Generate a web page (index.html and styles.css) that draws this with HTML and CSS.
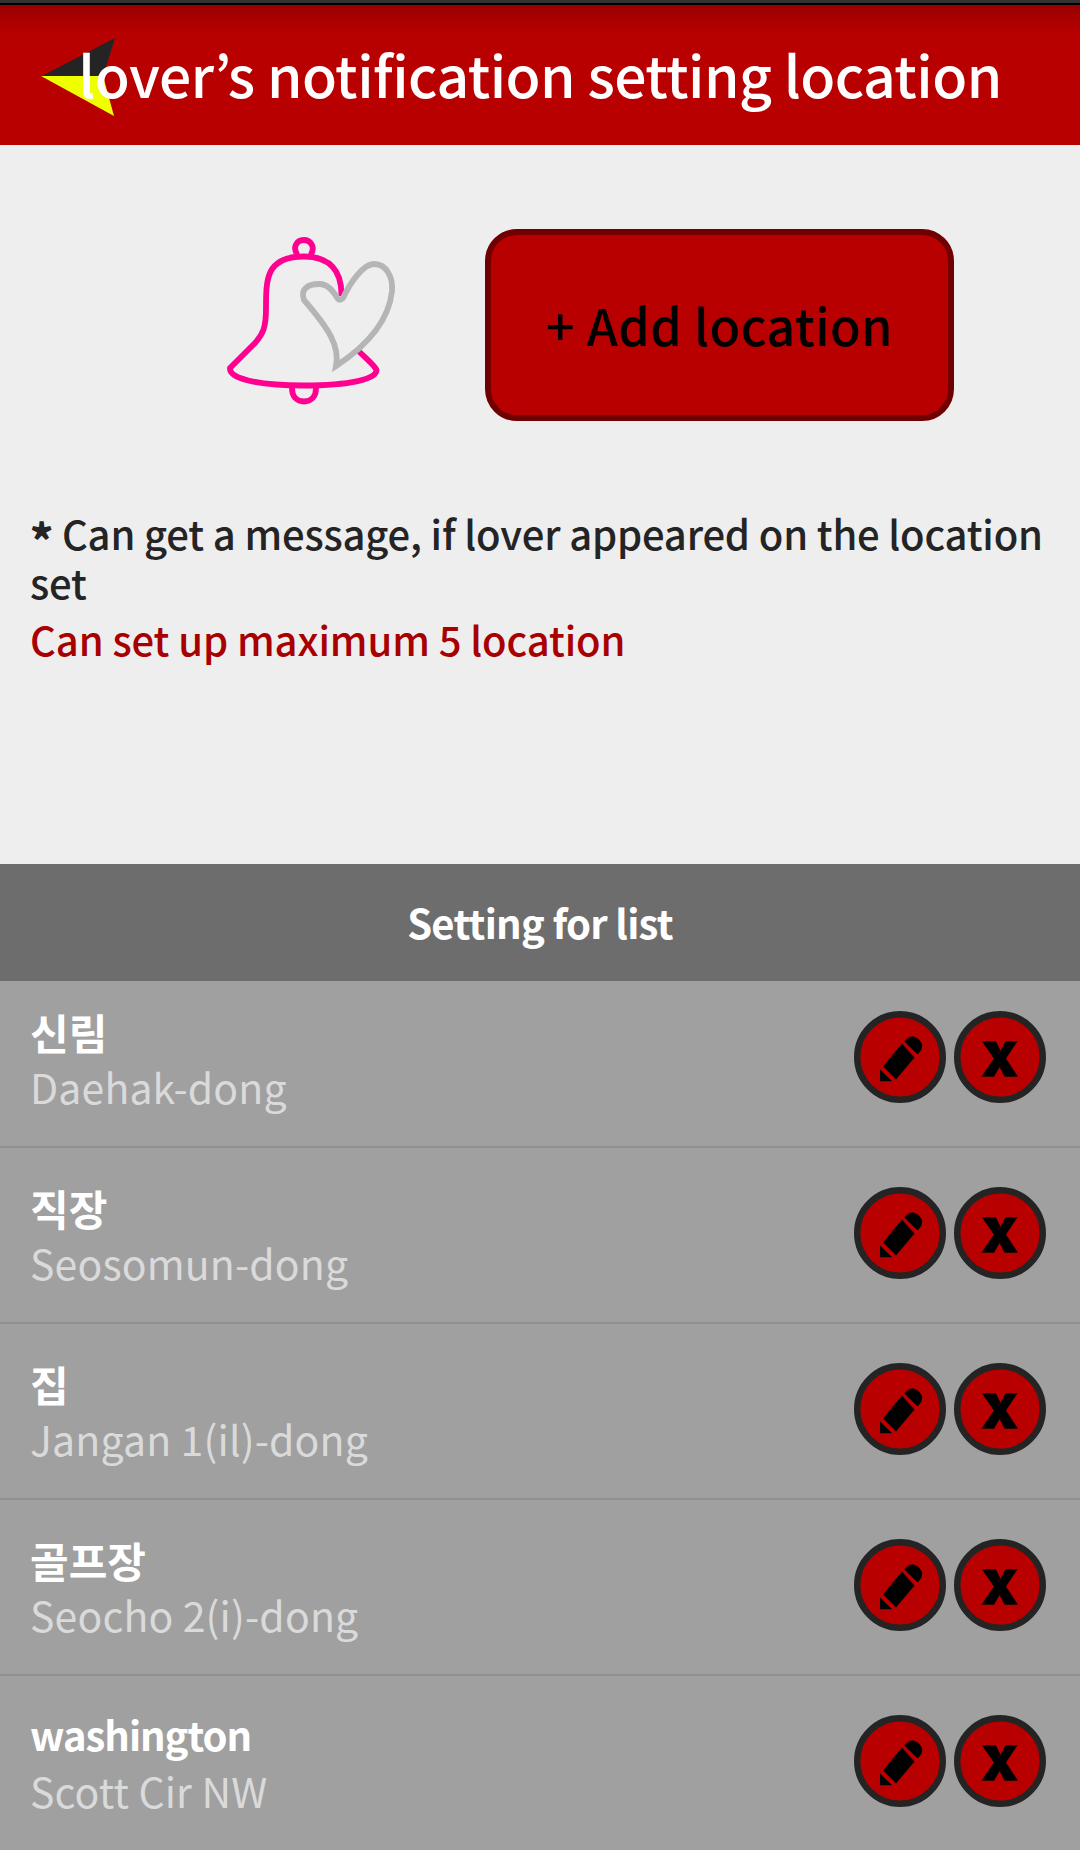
FILE: index.html
```html
<!DOCTYPE html>
<html lang="en">
<head>
<meta charset="utf-8">
<title>Notification locations</title>
<link rel="stylesheet" href="styles.css">
</head>
<body>
<svg class="sprite" aria-hidden="true">
  <symbol id="edit" viewBox="0 0 92 92">
    <circle cx="46" cy="46" r="42.8" fill="#b80000" stroke="#242424" stroke-width="6.4"/>
    <path d="M48 32.500 60.500 46.500 42 68.500 29 55.500Z M50.500 30.500Q58 21.500 65.500 29Q72 36 63.500 43.500Z M26 58.500 38 70.300H26Z"/>
  </symbol>
  <symbol id="remove" viewBox="0 0 92 92">
    <circle cx="46" cy="46" r="42.8" fill="#b80000" stroke="#242424" stroke-width="6.4"/>
    <path d="M28 30.300H42L46.500 40 51.500 30.300H63.500L52 47.500 64 65.800H50.500L45.700 56 40 65.800H27.500L39.800 47.500Z"/>
  </symbol>
</svg>
<div class="status"></div>
<header class="bar">
  <svg class="back" viewBox="0 0 76 80"><path d="M0 38.500 74 0 62 38.500Z" fill="#242424"/><path d="M0 38H62L73 78Z" fill="#f0ff00"/></svg>
  <h1 class="title">lover’s notification setting location</h1>
</header>
<main>
  <section class="intro">
    <div class="hero">
      <svg class="bell" viewBox="0 0 220 220" fill="none" stroke-width="5.8">
        <g stroke="#ff0090">
          <path d="M97.500 45C92 37 97 30 103.700 30S116 37 110.500 45"/>
          <path d="M141.500 86C142 60 129 46.500 104 46.500C66 46.500 66 69 66 98C66 118 63 124 55 133L30 158C29 168 55 175.500 104 175.500C150 175.500 177 169 176.500 160C175 156 170 152 158.500 141"/>
          <path d="M92 178C92 187 97 191.500 104 191.500S116 187 116 178"/>
        </g>
        <path stroke="#b5b5b5" d="M136 156C140 136 129 119 104 90C100 79 108 74 119 74C128 74 133 81 138 89Q140 91 143 88C150 73 163 54 174 54C187 54 193 68 192 81C189 110 168 135 136 156Z"/>
      </svg>
      <button class="add">+ Add location</button>
    </div>
    <p class="note"><span class="mark">*</span> Can get a message, if lover appeared on the location set</p>
    <p class="limit">Can set up maximum 5 location</p>
  </section>
  <h2 class="list-title">Setting for list</h2>
  <ul class="list">
    <li class="row">
      <div class="text"><p class="name">신림</p><p class="place">Daehak-dong</p></div>
      <svg class="action"><use href="#edit"/></svg><svg class="action"><use href="#remove"/></svg>
    </li>
    <li class="row">
      <div class="text"><p class="name">직장</p><p class="place">Seosomun-dong</p></div>
      <svg class="action"><use href="#edit"/></svg><svg class="action"><use href="#remove"/></svg>
    </li>
    <li class="row">
      <div class="text"><p class="name">집</p><p class="place">Jangan 1(il)-dong</p></div>
      <svg class="action"><use href="#edit"/></svg><svg class="action"><use href="#remove"/></svg>
    </li>
    <li class="row">
      <div class="text"><p class="name">골프장</p><p class="place">Seocho 2(i)-dong</p></div>
      <svg class="action"><use href="#edit"/></svg><svg class="action"><use href="#remove"/></svg>
    </li>
    <li class="row">
      <div class="text"><p class="name latin">washington</p><p class="place">Scott Cir NW</p></div>
      <svg class="action"><use href="#edit"/></svg><svg class="action"><use href="#remove"/></svg>
    </li>
  </ul>
</main>
</body>
</html>
```
FILE: styles.css
```css
* { box-sizing: border-box; margin: 0; padding: 0; }
body {
  height: 1850px;
  overflow: hidden;
  background: #eee;
  font-family: "Noto Sans CJK KR", sans-serif;
}
.sprite { display: none; }
.status { height: 5px; background: #333; border-bottom: 2px solid #000; }
.bar {
  position: relative;
  height: 140px;
  background: linear-gradient(#980000, #a50000 10px, #b80000 30px);
}
.back { position: absolute; left: 41px; top: 33px; width: 76px; height: 80px; }
.title {
  position: relative;
  color: #fff;
  font-size: 57px;
  font-weight: 500;
  line-height: 136px;
  letter-spacing: -0.54px;
  text-align: center;
  white-space: nowrap;
}
.intro { height: 719px; padding: 65px 30px 0; }
.hero { display: flex; gap: 65px; height: 299px; padding-left: 170px; }
.bell { width: 220px; height: 220px; }
.add {
  width: 469px;
  height: 192px;
  margin-top: 19px;
  padding-bottom: 2px;
  background: #b80000;
  border: 6px solid #700000;
  border-radius: 32px;
  color: #000;
  font: 500 50px/1 "Noto Sans CJK KR", sans-serif;
  letter-spacing: 0.5px;
}
.note { color: #242424; font-size: 40px; font-weight: 500; line-height: 49px; letter-spacing: -0.18px; margin-right: -20px; }
.mark { font-size: 44px; font-weight: 900; line-height: 0; vertical-align: -7px; }
.limit { margin-top: 8px; color: #a80000; font-size: 40px; font-weight: 500; line-height: 49px; letter-spacing: -0.1px; }
.list-title {
  height: 117px;
  background: #6d6d6d;
  color: #fff;
  font-size: 40px;
  font-weight: 700;
  line-height: 116px;
  letter-spacing: -0.75px;
  text-align: center;
}
.list { height: 869px; overflow: hidden; background: #a0a0a0; list-style: none; }
.row {
  display: flex;
  gap: 8px;
  height: 176px;
  padding: 32px 34px 0 30px;
  border-bottom: 2px solid #919191;
}
.row:first-child { height: 167px; padding-top: 23px; }
.text { flex: 1; }
.name { color: #fff; font-size: 42px; font-weight: 700; line-height: 56px; }
.latin { font-size: 40px; line-height: 52px; margin-bottom: 4px; letter-spacing: -1.05px; }
.place { color: #dadada; font-size: 41px; line-height: 53px; letter-spacing: 0.13px; }
.action { width: 92px; height: 92px; margin-top: 7px; }
```
